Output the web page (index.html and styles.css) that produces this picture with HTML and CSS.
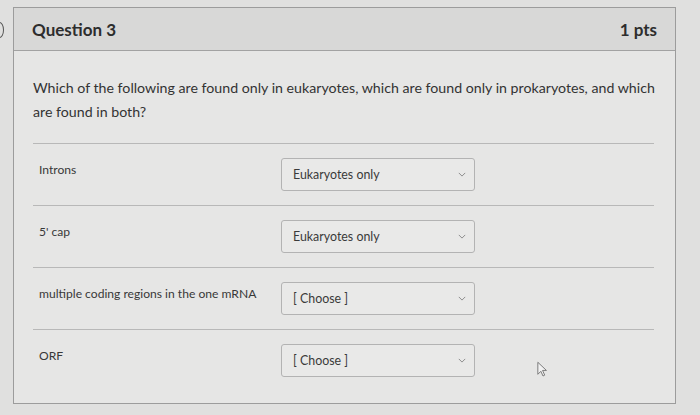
FILE: index.html
```html
<!DOCTYPE html>
<html lang="en">
<head>
<meta charset="utf-8">
<title>Question 3</title>
<link rel="stylesheet" href="styles.css">
</head>
<body>
<div class="edge-mark"></div>
<div class="card">
  <div class="header">
    <span class="title">Question 3</span>
    <span class="pts">1 pts</span>
  </div>
  <div class="body">
    <p class="question">Which of the following are found only in eukaryotes, which are found only in prokaryotes, and which are found in both?</p>
    <div class="rows">
      <div class="row">
        <span class="label">Introns</span>
        <div class="select"><span>Eukaryotes only</span><svg class="chev" viewBox="0 0 10 6" width="8" height="5"><path d="M1 1 L5 5 L9 1" fill="none" stroke="#8a8a8a" stroke-width="1.2"/></svg></div>
      </div>
      <div class="row">
        <span class="label">5' cap</span>
        <div class="select"><span>Eukaryotes only</span><svg class="chev" viewBox="0 0 10 6" width="8" height="5"><path d="M1 1 L5 5 L9 1" fill="none" stroke="#8a8a8a" stroke-width="1.2"/></svg></div>
      </div>
      <div class="row">
        <span class="label">multiple coding regions in the one mRNA</span>
        <div class="select"><span>[ Choose ]</span><svg class="chev" viewBox="0 0 10 6" width="8" height="5"><path d="M1 1 L5 5 L9 1" fill="none" stroke="#8a8a8a" stroke-width="1.2"/></svg></div>
      </div>
      <div class="row">
        <span class="label">ORF</span>
        <div class="select"><span>[ Choose ]</span><svg class="chev" viewBox="0 0 10 6" width="8" height="5"><path d="M1 1 L5 5 L9 1" fill="none" stroke="#8a8a8a" stroke-width="1.2"/></svg></div>
      </div>
    </div>
  </div>
  <svg class="cursor" viewBox="0 0 14 20" width="12" height="18"><path d="M1 1 L1 15 L4.5 11.5 L7 17 L9 16 L6.5 10.5 L11 10.5 Z" fill="#f2f2f2" stroke="#6a6a6a" stroke-width="1"/></svg>
</div>
</body>
</html>
```
FILE: styles.css
```css
html, body {
  margin: 0;
  padding: 0;
}
body {
  background: #e0e0df;
  font-family: Lato, "Open Sans", sans-serif;
  color: #333;
  padding: 7px 24px 10px 13px;
  position: relative;
  height: 415px;
  box-sizing: border-box;
}
.edge-mark {
  position: absolute;
  left: -5px;
  top: 22px;
  width: 7px;
  height: 14px;
  border: 1.5px solid #555;
  border-radius: 50%;
}
.card {
  position: relative;
  border: 1px solid #9c9c9c;
  background: #e6e6e5;
  height: 397px;
  box-sizing: border-box;
}
.header {
  display: flex;
  justify-content: space-between;
  align-items: center;
  height: 42px;
  padding: 0 18px 0 18px;
  background: #d8d8d7;
  border-bottom: 1px solid #a2a2a2;
}
.title {
  font-size: 17px;
  font-weight: 700;
  color: #2d2d2d;
}
.pts {
  font-size: 17px;
  font-weight: 700;
  color: #2d2d2d;
}
.body {
  padding: 25px 21px 0 19px;
}
.question {
  margin: 0 -14px 19px 0;
  font-size: 14.2px;
  line-height: 24px;
  color: #333;
}
.row {
  display: flex;
  align-items: flex-start;
  height: 61px;
  border-top: 1px solid #b8b8b8;
  padding-left: 6px;
}
.label {
  width: 242px;
  font-size: 12.1px;
  line-height: 16px;
  margin-top: 18px;
  color: #383838;
}
.select {
  margin-top: 14px;
  width: 194px;
  height: 33px;
  box-sizing: border-box;
  border: 1px solid #b3b3b3;
  border-radius: 3px;
  background: #e9e9e8;
  display: flex;
  align-items: center;
  justify-content: space-between;
  padding: 0 8px 0 11px;
  font-size: 12.4px;
  color: #3a3a3a;
}
.cursor {
  position: absolute;
  left: 523px;
  top: 353px;
}
```
